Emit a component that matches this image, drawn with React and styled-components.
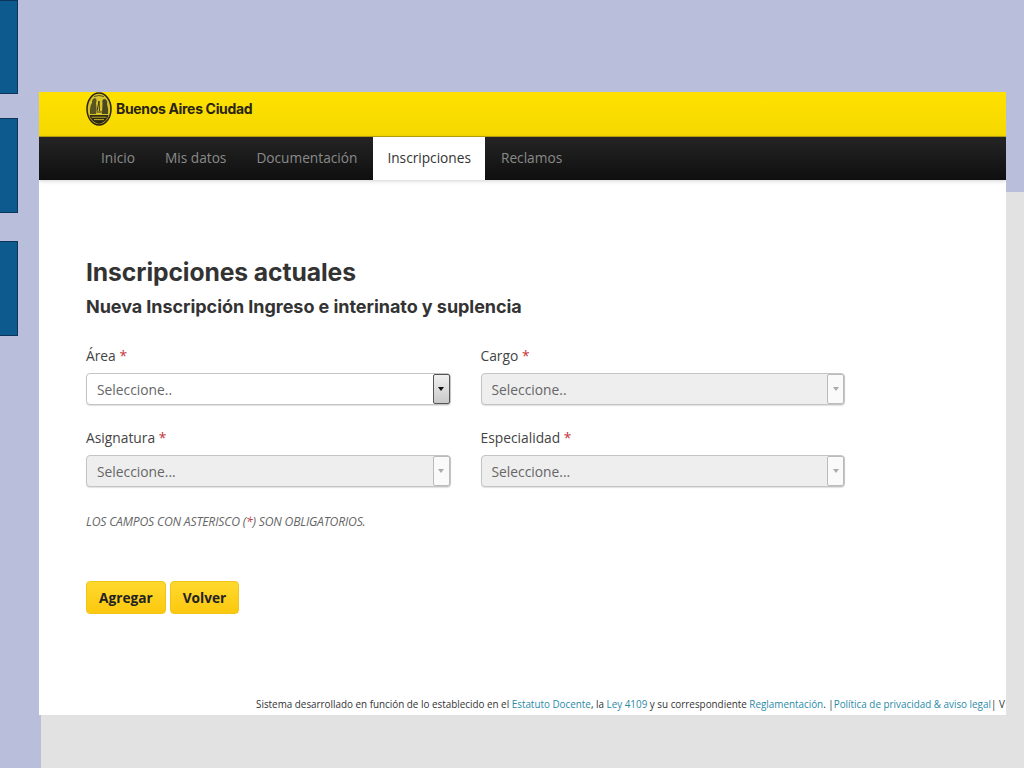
import React from "react";
import styled, { createGlobalStyle } from "styled-components";

const Global = createGlobalStyle`
  html, body { margin: 0; padding: 0; width: 1024px; height: 768px; overflow: hidden; background: #b9bedb; }
  * { box-sizing: border-box; }
`;

const Slide = styled.div`
  position: relative; width: 1024px; height: 768px; display: flex; align-items: flex-start;
  background: #b9bedb; overflow: hidden; font-family: "Open Sans", sans-serif;
`;
const Backdrop = styled.div`
  position: absolute; left: 41px; top: 192px; right: 0; bottom: 0; background: #e2e2e2;
`;
const Rail = styled.div`
  position: relative; width: 18px; flex: none; display: flex; flex-direction: column;
`;
const RailBlock = styled.div`
  height: ${p => p.$h}px; margin-bottom: ${p => p.$gap}px;
  background: #0d5a8f; border: 1px solid #0c3557; border-left: none;
`;
const Sheet = styled.main`
  position: relative; width: 967px; height: 623px; margin: 92px 0 0 21px; background: #fff;
  display: flex; flex-direction: column; overflow: hidden;
`;
const Brand = styled.header`
  height: 45px; flex: none; display: flex; align-items: flex-start; gap: 4px; padding: 0 0 0 47px;
  background: linear-gradient(#ffe100, #f5d800); border-bottom: 1px solid #b8a410;
`;
const BrandName = styled.span`
  margin-top: 9px; font: 700 14px/16px "Inter", sans-serif; letter-spacing: -0.33px; color: #2a2413;
`;
const Nav = styled.nav`
  height: 43px; flex: none; display: flex; padding-left: 47px;
  background: linear-gradient(#242424, #0f0f0f); box-shadow: 0 1px 4px rgba(0,0,0,.18);
`;
const NavItem = styled.a`
  display: flex; align-items: center; padding: 0 ${p => (p.$active ? 14 : 15)}px 2px; font-size: 13.7px;
  margin: 0 ${p => (p.$active ? 1 : 0)}px;
  color: ${p => (p.$active ? "#333" : "#8a8a8a")}; background: ${p => (p.$active ? "#fff" : "transparent")};
`;
const Content = styled.section`
  flex: 1; padding: 78px 0 0 47px; color: #333;
`;
const Title = styled.h1`
  margin: 0; font: 700 24.7px/28px "Inter", sans-serif; letter-spacing: -0.1px; color: #333;
`;
const Subtitle = styled.h2`
  margin: 9px 0 0; font: 700 18px/24px "Inter", sans-serif; letter-spacing: -0.05px; color: #333;
`;
const FormGrid = styled.div`
  display: grid; grid-template-columns: 364.5px 364.5px; column-gap: 30px; row-gap: 23px; margin-top: 27px;
`;
const Field = styled.div`
  display: flex; flex-direction: column; gap: 7px;
`;
const Label = styled.label`
  font-size: 13.8px; line-height: 20px; color: #444;
`;
const Star = styled.span`
  color: #c4343c;
`;
const Select = styled.div`
  height: 32px; display: flex; align-items: stretch; justify-content: space-between;
  border: 1px solid #c4c4c4; border-radius: 4px; box-shadow: 0 1px 1px rgba(0,0,0,.12);
  background: ${p => (p.$disabled ? "#eeeeee" : "#fff")};
`;
const SelectText = styled.span`
  align-self: center; padding-left: 10px; font-size: 13.8px; color: #666;
`;
const Arrow = styled.span`
  width: 17px; display: flex; align-items: center; justify-content: center;
  border: 1px solid ${p => (p.$disabled ? "#bbb" : "#555")}; border-radius: 2px;
  background: ${p => (p.$disabled ? "#fafafa" : "linear-gradient(#f0f0f0, #c9c9c9)")};
  &::after {
    content: ""; border-style: solid; border-width: 4px 3.5px 0;
    border-color: ${p => (p.$disabled ? "#aaa" : "#111")} transparent transparent;
  }
`;
const Note = styled.p`
  margin: 26px 0 0; font-size: 12.2px; line-height: 18px; font-style: italic; color: #666; letter-spacing: -0.2px;
`;
const Actions = styled.div`
  display: flex; gap: 4px; margin-top: 50px;
`;
const Button = styled.button`
  height: 33px; padding: 0 ${p => p.$pad}px; border: 1px solid #f0c419; border-radius: 4px;
  background: linear-gradient(#ffd92e, #fcc80f); color: #222;
  font: 700 13.7px "Open Sans", sans-serif;
`;
const Footer = styled.footer`
  flex: none; height: 18px; padding: 0 0 0 217px; display: flex; align-items: flex-start; white-space: pre;
  font-size: 9.87px; line-height: 15px; color: #333; overflow: hidden;
`;
const FooterLink = styled.a`
  color: #2a8aa8;
`;

const Logo = () => (
  <svg width="26" height="34" viewBox="0 0 26 34" aria-hidden="true">
    <ellipse cx="13" cy="17" rx="12" ry="16" fill="#d8c32a" stroke="#2a2413" strokeWidth="1.5" />
    <path d="M4 22 Q3.5 14 6 11 Q5.5 7 9 6 Q11.5 7 10 11 Q11 16 10 22Z" fill="#5a5520" />
    <path d="M16 22 L16.5 11 Q15.5 7 19 7 Q22 9 21 12 Q22.5 16 22 22Z" fill="#4a4620" />
    <path d="M11 19 L13 9 L13.5 19 M10.5 20 H16" stroke="#3a3618" strokeWidth="1" fill="none" />
    <path d="M3.5 23 H22.5 Q21.5 29.5 13 32 Q4.5 29.5 3.5 23Z" fill="#2f2a14" />
    <path d="M5.5 25.2 H20.5 M8 27.6 H18" stroke="#cdb92a" strokeWidth="0.9" />
    <path d="M8 4.5 Q13 2.5 18 4.5" stroke="#5a5520" strokeWidth="1" fill="none" />
  </svg>
);

const fields = [
  { label: "Área", text: "Seleccione.." },
  { label: "Cargo", text: "Seleccione..", disabled: true },
  { label: "Asignatura", text: "Seleccione...", disabled: true },
  { label: "Especialidad", text: "Seleccione...", disabled: true },
];

export default function App() {
  return (
    <Slide>
      <Global />
      <Backdrop />
      <Rail>
        <RailBlock $h={94} $gap={24} />
        <RailBlock $h={95} $gap={28} />
        <RailBlock $h={95} $gap={0} />
      </Rail>
      <Sheet>
        <Brand>
          <Logo />
          <BrandName>Buenos Aires Ciudad</BrandName>
        </Brand>
        <Nav>
          <NavItem>Inicio</NavItem>
          <NavItem>Mis datos</NavItem>
          <NavItem>Documentación</NavItem>
          <NavItem $active>Inscripciones</NavItem>
          <NavItem>Reclamos</NavItem>
        </Nav>
        <Content>
          <Title>Inscripciones actuales</Title>
          <Subtitle>Nueva Inscripción Ingreso e interinato y suplencia</Subtitle>
          <FormGrid>
            {fields.map(f => (
              <Field key={f.label}>
                <Label>{f.label} <Star>*</Star></Label>
                <Select $disabled={f.disabled}>
                  <SelectText>{f.text}</SelectText>
                  <Arrow $disabled={f.disabled} />
                </Select>
              </Field>
            ))}
          </FormGrid>
          <Note>LOS CAMPOS CON ASTERISCO (<Star>*</Star>) SON OBLIGATORIOS.</Note>
          <Actions>
            <Button $pad={12}>Agregar</Button>
            <Button $pad={12}>Volver</Button>
          </Actions>
        </Content>
        <Footer>
          Sistema desarrollado en función de lo establecido en el <FooterLink>Estatuto Docente</FooterLink>, la <FooterLink>Ley 4109</FooterLink> y su correspondiente <FooterLink>Reglamentación</FooterLink>. |<FooterLink>Política de privacidad &amp; aviso legal</FooterLink>| V
        </Footer>
      </Sheet>
    </Slide>
  );
}
